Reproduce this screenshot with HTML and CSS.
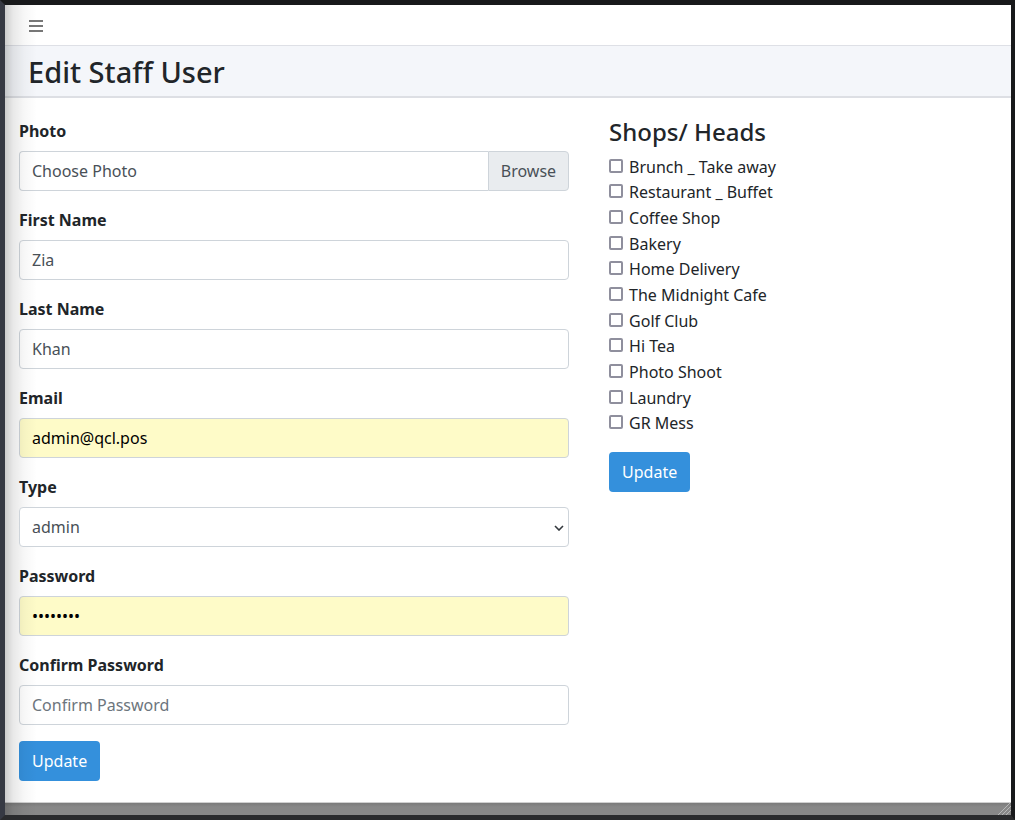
FILE: index.html
```html
<!DOCTYPE html>
<html lang="en">
<head>
<meta charset="utf-8">
<meta name="viewport" content="width=device-width, initial-scale=1">
<title>Edit Staff User</title>
<link rel="stylesheet" href="styles.css">
</head>
<body>
<div class="app">
  <nav class="topbar">
    <button class="menu-button" type="button" aria-label="Toggle menu">
      <svg width="14" height="12" viewBox="0 0 14 12" aria-hidden="true"><path d="M0 0h14v2H0zM0 5h14v2H0zM0 10h14v2H0z" fill="currentColor"/></svg>
    </button>
  </nav>
  <header class="page-header"><h1 class="page-title">Edit Staff User</h1></header>
  <main class="content">
    <form class="user-form">
      <div class="field">
        <label class="field-label" for="photo">Photo</label>
        <div class="file-group">
          <input class="control file-name" id="photo" type="text" value="Choose Photo" readonly>
          <button class="browse" type="button">Browse</button>
        </div>
      </div>
      <div class="field">
        <label class="field-label" for="first">First Name</label>
        <input class="control" id="first" type="text" value="Zia">
      </div>
      <div class="field">
        <label class="field-label" for="last">Last Name</label>
        <input class="control" id="last" type="text" value="Khan">
      </div>
      <div class="field">
        <label class="field-label" for="email">Email</label>
        <input class="control filled" id="email" type="email" value="admin@qcl.pos">
      </div>
      <div class="field">
        <label class="field-label" for="type">Type</label>
        <div class="select-wrap">
          <select class="control select" id="type"><option>admin</option></select>
          <svg class="chevron" width="10" height="6" viewBox="0 0 10 6" aria-hidden="true"><path d="M1 1l4 4 4-4" fill="none" stroke="currentColor" stroke-width="1.6"/></svg>
        </div>
      </div>
      <div class="field">
        <label class="field-label" for="password">Password</label>
        <input class="control filled" id="password" type="password" value="password">
      </div>
      <div class="field">
        <label class="field-label" for="confirm">Confirm Password</label>
        <input class="control" id="confirm" type="password" placeholder="Confirm Password">
      </div>
      <button class="update" type="button">Update</button>
    </form>
    <form class="shops">
      <h2 class="shops-title">Shops/ Heads</h2>
      <div class="shop-list">
        <label class="shop"><input class="check" type="checkbox">Brunch _ Take away</label>
        <label class="shop"><input class="check" type="checkbox">Restaurant _ Buffet</label>
        <label class="shop"><input class="check" type="checkbox">Coffee Shop</label>
        <label class="shop"><input class="check" type="checkbox">Bakery</label>
        <label class="shop"><input class="check" type="checkbox">Home Delivery</label>
        <label class="shop"><input class="check" type="checkbox">The Midnight Cafe</label>
        <label class="shop"><input class="check" type="checkbox">Golf Club</label>
        <label class="shop"><input class="check" type="checkbox">Hi Tea</label>
        <label class="shop"><input class="check" type="checkbox">Photo Shoot</label>
        <label class="shop"><input class="check" type="checkbox">Laundry</label>
        <label class="shop"><input class="check" type="checkbox">GR Mess</label>
      </div>
      <button class="update" type="button">Update</button>
    </form>
  </main>
  <footer class="status">
    <svg class="grip" width="14" height="12" viewBox="0 0 14 12" aria-hidden="true"><path d="M1 12L13 0M5 12L14 3M9 12L14 7" fill="none" stroke="#b8b8b8" stroke-width="1"/></svg>
  </footer>
</div>
</body>
</html>
```
FILE: styles.css
```css
* { box-sizing: border-box; }

body {
  margin: 0;
  min-height: 100vh;
  display: flex;
  border-style: solid;
  border-width: 5px 4px 5px 5px;
  border-color: #18191b #18191b #2a2b2d #363943;
  background: #fff;
  color: #212529;
  font: 16px/26px "Noto Sans", sans-serif;
}

.app {
  position: relative;
  flex: 1;
  min-width: 0;
  display: flex;
  flex-direction: column;
}

/* Shade cast by the sidebar over the page edge */
.app::before {
  content: "";
  position: absolute;
  inset: 0 auto 0 0;
  width: 32px;
  background: linear-gradient(90deg, rgba(0,0,0,.2), rgba(0,0,0,.09) 25%, rgba(0,0,0,.03) 60%, transparent);
  pointer-events: none;
}

.topbar {
  display: flex;
  align-items: center;
  height: 41px;
  padding: 1px 24px 0;
  border-bottom: 1px solid #dee0e6;
}

.menu-button {
  display: flex;
  padding: 0;
  border: 0;
  background: none;
  color: #777;
}

.page-header {
  padding: 8px 23px 7px;
  background: #f4f6fa;
  border-bottom: 2px solid #dddfe4;
}

.page-title { margin: 0; font-size: 29px; font-weight: 500; line-height: 35px; }

.content {
  flex: 1;
  display: grid;
  grid-template-columns: 7fr 5fr;
  align-items: start;
  gap: 40px;
  padding: 20px 9px 20px 14px;
}

.field { margin-bottom: 16px; }
.field-label { display: block; margin-bottom: 7px; font-weight: 700; }

.control {
  display: block;
  width: 100%;
  height: 40px;
  padding: 6px 12px;
  border: 1px solid #ced4da;
  border-radius: 4px;
  background: #fff;
  color: #495057;
  font: inherit;
}

.control::placeholder { color: #6c757d; opacity: 1; }
.filled { background: #fefbc8; color: #000; }

.file-group { display: flex; }
.file-name { flex: 1; min-width: 0; border-radius: 4px 0 0 4px; border-right: 0; }

.browse {
  padding: 0 12px;
  border: 1px solid #ced4da;
  border-radius: 0 4px 4px 0;
  background: #e9ecef;
  color: #495057;
  font: inherit;
}

.select-wrap { position: relative; }
.select { appearance: none; }
.chevron { position: absolute; right: 5px; top: 18px; color: #33383d; pointer-events: none; }

.update {
  display: block;
  height: 40px;
  padding: 0 13px;
  border: 0;
  border-radius: 4px;
  background: #3490dc;
  color: #fff;
  font: inherit;
}

.shops-title { margin: 0 0 8px; font-size: 24px; font-weight: 500; line-height: 28px; }

.shop-list {
  display: grid;
  grid-auto-rows: 1fr;
  min-height: 282px;
  margin-bottom: 16px;
  line-height: 24px;
}

.shop { display: flex; align-items: center; gap: 6px; }

.check {
  appearance: none;
  width: 14px;
  height: 14px;
  margin: 0 0 2px;
  border: 2px solid #8f8f9d;
  border-radius: 2px;
  background: #fff;
}

.check:checked { background: #3490dc; }

.status {
  display: flex;
  justify-content: flex-end;
  height: 13px;
  border-top: 1px solid #d0d0d0;
  background: linear-gradient(#7b7b7b, #888 4px);
}
```
